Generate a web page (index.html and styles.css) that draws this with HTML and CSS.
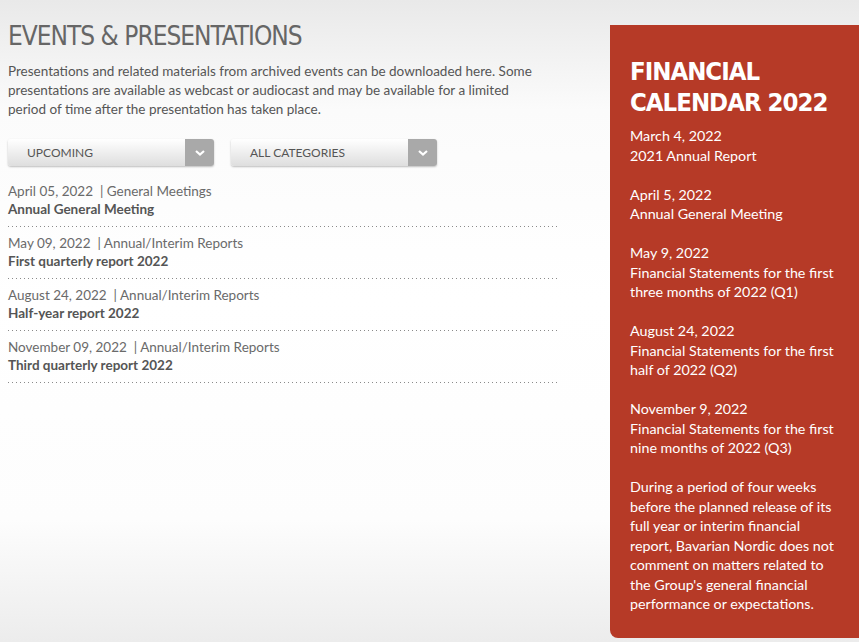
FILE: index.html
```html
<!DOCTYPE html>
<html lang="en">
<head>
<meta charset="utf-8">
<title>Events &amp; Presentations</title>
<link rel="stylesheet" href="styles.css">
</head>
<body>
<div class="page">
  <main class="main">
    <h1 class="title">EVENTS &amp; PRESENTATIONS</h1>
    <p class="intro">Presentations and related materials from archived events can be downloaded here. Some presentations are available as webcast or audiocast and may be available for a limited period of time after the presentation has taken place.</p>
    <div class="filters">
      <div class="select"><span class="select-label">UPCOMING</span><span class="select-arrow"><svg width="12" height="8" viewBox="0 0 12 8"><path d="M2 2 L6 5.5 L10 2" fill="none" stroke="#fff" stroke-width="2.2"/></svg></span></div>
      <div class="select"><span class="select-label">ALL CATEGORIES</span><span class="select-arrow"><svg width="12" height="8" viewBox="0 0 12 8"><path d="M2 2 L6 5.5 L10 2" fill="none" stroke="#fff" stroke-width="2.2"/></svg></span></div>
    </div>
    <ul class="events">
      <li class="event"><div class="meta">April 05, 2022 &nbsp;|&nbsp;General Meetings</div><div class="name">Annual General Meeting</div></li>
      <li class="event"><div class="meta">May 09, 2022 &nbsp;|&nbsp;Annual/Interim Reports</div><div class="name">First quarterly report 2022</div></li>
      <li class="event"><div class="meta">August 24, 2022 &nbsp;|&nbsp;Annual/Interim Reports</div><div class="name">Half-year report 2022</div></li>
      <li class="event"><div class="meta">November 09, 2022 &nbsp;|&nbsp;Annual/Interim Reports</div><div class="name">Third quarterly report 2022</div></li>
    </ul>
  </main>
  <aside class="calendar">
    <h2 class="cal-title">FINANCIAL<br>CALENDAR 2022</h2>
    <p class="cal-item">March 4, 2022<br>2021 Annual Report</p>
    <p class="cal-item">April 5, 2022<br>Annual General Meeting</p>
    <p class="cal-item">May 9, 2022<br>Financial Statements for the first three months of 2022 (Q1)</p>
    <p class="cal-item">August 24, 2022<br>Financial Statements for the first half of 2022 (Q2)</p>
    <p class="cal-item">November 9, 2022<br>Financial Statements for the first nine months of 2022 (Q3)</p>
    <p class="cal-item">During a period of four weeks before the planned release of its full year or interim financial report, Bavarian Nordic does not comment on matters related to the Group's general financial performance or expectations.</p>
  </aside>
</div>
</body>
</html>
```

FILE: styles.css
```css
html, body {
  margin: 0;
  padding: 0;
  height: 100%;
}
body {
  background: linear-gradient(to bottom, #e9e9e9 0px, #fbfbfb 110px, #ffffff 300px, #fdfdfd 520px, #ececec 642px);
  font-family: Lato, "Open Sans", sans-serif;
  color: #555;
  overflow: hidden;
}
.page {
  display: flex;
  height: 642px;
}
.main {
  width: 552px;
  padding-left: 8px;
}
.title {
  margin: 19px 0 0;
  font-family: "DejaVu Sans Condensed", "Liberation Sans Narrow", sans-serif;
  font-stretch: condensed;
  font-size: 26px;
  line-height: 34px;
  letter-spacing: -1px;
  font-weight: 400;
  color: #666;
}
.intro {
  margin: 9px 0 0;
  width: 540px;
  font-size: 13.5px;
  line-height: 19px;
  color: #555;
}
.filters {
  display: flex;
  gap: 17px;
  margin-top: 20px;
}
.select {
  width: 206px;
  height: 27px;
  display: flex;
  border-radius: 3px;
  background: linear-gradient(to bottom, #ffffff, #dedede);
  box-shadow: 0 1px 2px rgba(0,0,0,0.25);
  overflow: hidden;
}
.select-label {
  flex: 1;
  padding-left: 19px;
  font-size: 12px;
  line-height: 27px;
  color: #555;
}
.select-arrow {
  width: 29px;
  background: #a9a9a9;
  display: flex;
  align-items: center;
  justify-content: center;
}
.events {
  list-style: none;
  margin: 9px 0 0;
  padding: 0;
}
.event {
  padding: 7px 0 9px;
  background-image: linear-gradient(to right, #8a8a8a 1px, transparent 1px);
  background-size: 4px 1px;
  background-repeat: repeat-x;
  background-position: left bottom;
}
.meta {
  font-size: 13.5px;
  line-height: 18px;
  color: #6a6a6a;
}
.name {
  font-size: 13.5px;
  line-height: 18px;
  font-weight: 700;
  color: #555;
}
.calendar {
  margin-left: 50px;
  margin-top: 25px;
  width: 249px;
  height: 613px;
  box-sizing: border-box;
  padding: 31px 20px 0 20px;
  background: #b63a27;
  border-radius: 0 0 0 8px;
  color: #fff;
}
.cal-title {
  margin: 0 0 8px;
  font-family: "DejaVu Sans Condensed", "Liberation Sans Narrow", sans-serif;
  font-stretch: condensed;
  font-size: 25.5px;
  line-height: 31px;
  letter-spacing: -1px;
  font-weight: 700;
}
.cal-item {
  margin: 0 0 19.5px;
  font-size: 14.3px;
  line-height: 19.5px;
}
```
